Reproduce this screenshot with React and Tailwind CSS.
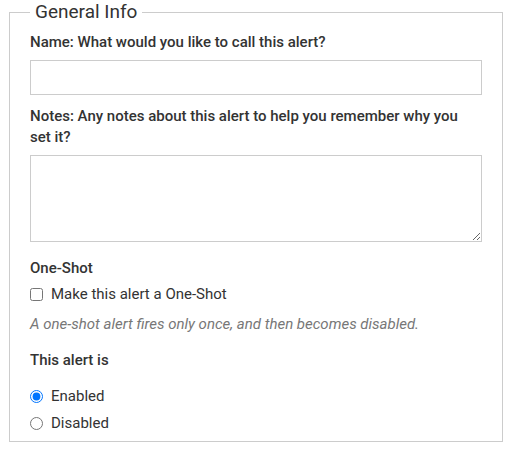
export default function App() {
  return (
    <div className="bg-white w-[507px] h-[454px] font-['Roboto',sans-serif] text-[#333]">
      <fieldset className="ml-[9px] w-[494px] border border-[#ccc] px-[20px] pt-[8px] pb-[7px]">
        <legend className="px-[5px] text-[19px] leading-[24px] text-[#333]">General Info</legend>

        <label className="block text-[15px] leading-[21px] font-medium mb-[7px]">
          Name: What would you like to call this alert?
        </label>
        <input type="text" className="block w-full h-[35px] border border-[#ccc] bg-white px-2 outline-none" />

        <label className="block mt-[11px] text-[15px] leading-[21px] font-medium mb-[7px]">
          Notes: Any notes about this alert to help you remember why you set it?
        </label>
        <textarea className="block w-full h-[87px] border border-[#ccc] bg-white p-2 outline-none" />

        <div className="mt-[16px] text-[15px] leading-[21px] font-medium">One-Shot</div>
        <label className="mt-[5px] flex items-center gap-[8px] text-[15px] leading-[21px]">
          <input type="checkbox" className="m-0 w-[13px] h-[13px]" />
          <span>Make this alert a One-Shot</span>
        </label>
        <p className="mt-[9px] text-[15px] leading-[21px] italic text-[#777]">
          A one-shot alert fires only once, and then becomes disabled.
        </p>

        <div className="mt-[15px] text-[15px] leading-[21px] font-medium">This alert is</div>
        <label className="mt-[15px] flex items-center gap-[8px] text-[15px] leading-[21px]">
          <input type="radio" name="state" defaultChecked className="m-0 w-[13px] h-[13px]" />
          <span>Enabled</span>
        </label>
        <label className="mt-[6px] flex items-center gap-[8px] text-[15px] leading-[21px]">
          <input type="radio" name="state" className="m-0 w-[13px] h-[13px]" />
          <span>Disabled</span>
        </label>
      </fieldset>
    </div>
  );
}
